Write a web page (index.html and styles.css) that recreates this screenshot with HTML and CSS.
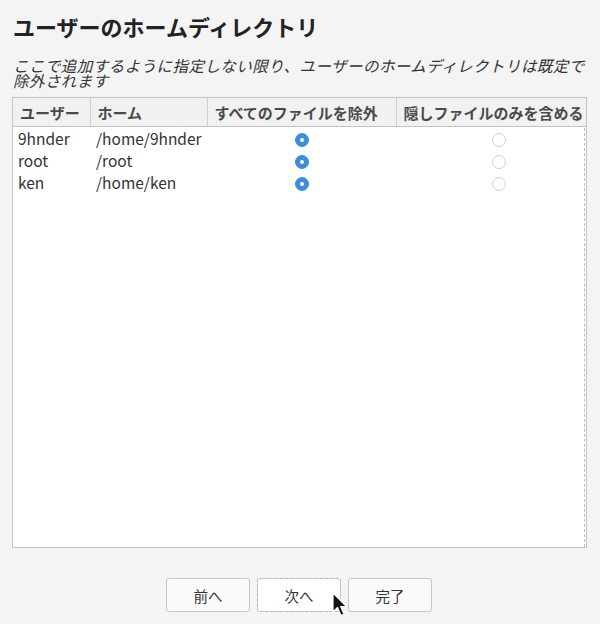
FILE: index.html
```html
<!DOCTYPE html>
<html lang="ja">
<head>
  <meta charset="UTF-8">
  <meta name="viewport" content="width=device-width, initial-scale=1">
  <title>ユーザーのホームディレクトリ</title>
  <link rel="stylesheet" href="styles.css">
</head>
<body>

  <div class="page">
    <h1 class="title">ユーザーのホームディレクトリ</h1>
    <p class="desc">ここで追加するように指定しない限り、ユーザーのホームディレクトリは既定で除外されます</p>

    <div class="list">
      <table class="users">
        <colgroup>
          <col class="c-user">
          <col class="c-home">
          <col class="c-skip">
          <col class="c-hidden">
        </colgroup>
        <thead>
          <tr>
            <th>ユーザー</th>
            <th>ホーム</th>
            <th>すべてのファイルを除外</th>
            <th>隠しファイルのみを含める</th>
          </tr>
        </thead>
        <tbody>
          <tr>
            <td>9hnder</td>
            <td>/home/9hnder</td>
            <td class="radio-cell"><span class="radio on"></span></td>
            <td class="radio-cell"><span class="radio"></span></td>
          </tr>
          <tr>
            <td>root</td>
            <td>/root</td>
            <td class="radio-cell"><span class="radio on"></span></td>
            <td class="radio-cell"><span class="radio"></span></td>
          </tr>
          <tr>
            <td>ken</td>
            <td>/home/ken</td>
            <td class="radio-cell"><span class="radio on"></span></td>
            <td class="radio-cell"><span class="radio"></span></td>
          </tr>
        </tbody>
      </table>
      <div class="drop-line"></div>
    </div>

    <div class="buttons">
      <button class="btn">前へ</button>
      <button class="btn focus">次へ
        <svg class="pointer" width="18" height="26" viewBox="0 0 18 26">
          <path d="M1 1 L1 20 L5.5 15.5 L9 23.5 L12 22 L8.6 14.5 L14.5 14.5 Z" fill="#111" stroke="#fff" stroke-width="1.2" stroke-linejoin="round"/>
        </svg>
      </button>
      <button class="btn">完了</button>
    </div>
  </div>

</body>
</html>
```

FILE: styles.css
```css
body {
  margin: 0;
  background-color: #f4f4f4;
  font-family: "Noto Sans CJK JP", "Noto Sans", sans-serif;
  color: #333;
}

.page {
  width: 600px;
  height: 624px;
  box-sizing: border-box;
  padding: 11px 13px 0 12px;
}

.title {
  margin: 0 0 0 1px;
  font-size: 22px;
  line-height: 30px;
  font-weight: bold;
  color: #222;
}

.desc {
  margin: 17px 0 0 1px;
  font-size: 15.5px;
  line-height: 15px;
  letter-spacing: 0.45px;
  font-style: italic;
  color: #333;
}

.list {
  position: relative;
  margin-top: 9px;
  height: 451px;
  box-sizing: border-box;
  border: 1px solid #c4c4c4;
  background-color: #fff;
  overflow: hidden;
}

.users {
  border-collapse: collapse;
  table-layout: fixed;
  width: 589px;
  font-size: 15px;
}

.c-user { width: 77px; }
.c-home { width: 117px; }
.c-skip { width: 189px; }
.c-hidden { width: 206px; }

.users th {
  height: 28px;
  padding: 0 0 0 7px;
  background-color: #f1f1f1;
  border-right: 1px solid #d0d0d0;
  border-bottom: 1px solid #c4c4c4;
  text-align: left;
  font-weight: bold;
  color: #4a4a4a;
  white-space: nowrap;
  overflow: hidden;
}

.users td {
  height: 22px;
  padding: 0 0 0 5px;
  white-space: nowrap;
  overflow: hidden;
  font-size: 15.5px;
  color: #333;
}

.users td:nth-child(2) {
  padding-left: 6px;
}

.radio-cell {
  text-align: center;
}

.users td.radio-cell {
  padding-left: 0;
}

.radio {
  display: inline-block;
  width: 12px;
  height: 12px;
  border: 1px solid #d0d0d0;
  border-radius: 50%;
  background-color: #fff;
  vertical-align: middle;
  position: relative;
  top: -1px;
}

.radio.on {
  border-color: #3b8edc;
  background-color: #3b8edc;
}

.radio.on::after {
  content: "";
  position: absolute;
  left: 4px;
  top: 4px;
  width: 4px;
  height: 4px;
  border-radius: 50%;
  background-color: #fff;
}

/* column drag marker on the right edge */
.drop-line {
  position: absolute;
  right: 1px;
  top: 30px;
  bottom: 0;
  border-left: 1px dashed #bdbdbd;
}

.buttons {
  display: flex;
  justify-content: center;
  gap: 7px;
  margin-top: 30px;
  padding-right: 1px;
}

.btn {
  position: relative;
  width: 84px;
  height: 34px;
  border: 1px solid #c6c6c6;
  border-radius: 3px;
  background-color: #fafafa;
  font-family: "Noto Sans CJK JP", "Noto Sans", sans-serif;
  font-size: 14.5px;
  color: #333;
  cursor: pointer;
}

.btn.focus {
  background-color: #fff;
  outline: 1px dashed #bbb;
  outline-offset: -1px;
  border-color: #d4d4d4;
}

.pointer {
  position: absolute;
  left: 74px;
  top: 13px;
}
```
